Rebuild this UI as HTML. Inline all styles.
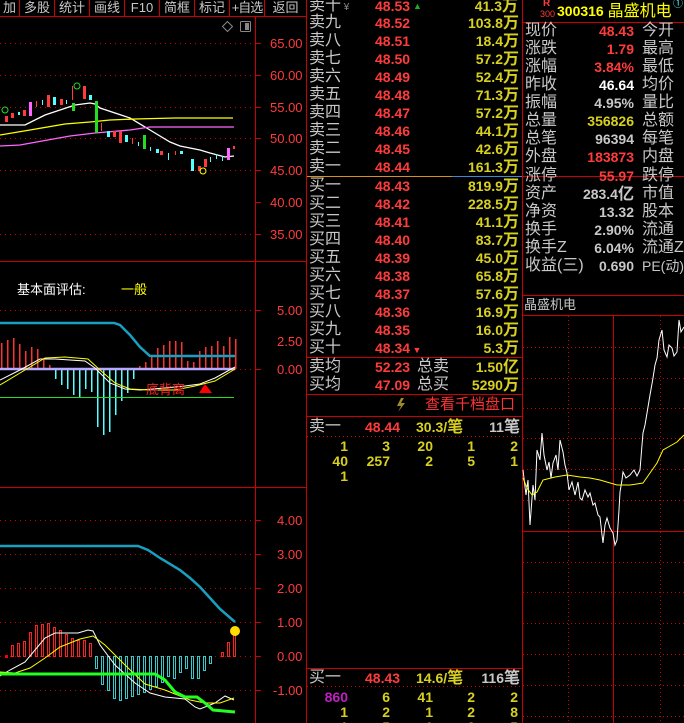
<!DOCTYPE html>
<html><head><meta charset="utf-8"><style>
html,body{margin:0;width:684px;height:723px;background:#000;overflow:hidden;position:relative;font-family:"Liberation Sans","Noto Sans CJK SC",sans-serif}
.a{position:absolute;white-space:nowrap;line-height:18px}
.c{font-size:16px;color:#c8c8c8}
.n{font-size:14px;font-weight:bold}
.r{color:#ff3c3c}.y{color:#d8d020}.w{color:#c8c8c8}.wh{color:#fff}
.tb{position:absolute;top:0;height:16px;font-size:13px;color:#c8c8c8;line-height:15px;text-align:center;border-right:1px solid #c00;white-space:nowrap;overflow:hidden}
</style></head><body>
<div class="tb" style="left:0;width:19px">加</div>
<div class="tb" style="left:20px;width:34px">多股</div>
<div class="tb" style="left:55px;width:34px">统计</div>
<div class="tb" style="left:90px;width:34px">画线</div>
<div class="tb" style="left:125px;width:34px">F10</div>
<div class="tb" style="left:160px;width:34px">简框</div>
<div class="tb" style="left:195px;width:34px">标记</div>
<div class="tb" style="left:230px;width:34px;letter-spacing:-1px">+自选</div>
<div class="tb" style="left:265px;width:41px;border:none">返回</div>

<svg width="684" height="723" style="position:absolute;left:0;top:0">
<line x1="0" y1="16.5" x2="306" y2="16.5" stroke="#c00"/>
<line x1="255.5" y1="17" x2="255.5" y2="723" stroke="#c00"/>
<line x1="306.5" y1="0" x2="306.5" y2="723" stroke="#c00"/>
<line x1="522.5" y1="0" x2="522.5" y2="723" stroke="#c00"/>
<line x1="0" y1="261.5" x2="306" y2="261.5" stroke="#c00"/>
<line x1="0" y1="487.5" x2="306" y2="487.5" stroke="#c00"/>
<path d="M227.5 21.5 L232.5 26.5 L227.5 31.5 L222.5 26.5Z" fill="none" stroke="#888"/>
<rect x="240.5" y="21.5" width="10" height="10" fill="none" stroke="#888" rx="1"/><rect x="245" y="23" width="4" height="7" fill="#888"/>
<g stroke="#c00" stroke-dasharray="1,4">
<line x1="0" y1="43.5" x2="255" y2="43.5"/><line x1="0" y1="75.5" x2="255" y2="75.5"/><line x1="0" y1="107.5" x2="255" y2="107.5"/><line x1="0" y1="138.5" x2="255" y2="138.5"/><line x1="0" y1="170.5" x2="255" y2="170.5"/><line x1="0" y1="234.5" x2="255" y2="234.5"/>
<line x1="0" y1="310.5" x2="255" y2="310.5"/><line x1="235" y1="369.5" x2="255" y2="369.5"/>
<line x1="0" y1="520.5" x2="255" y2="520.5"/><line x1="0" y1="554.5" x2="255" y2="554.5"/><line x1="0" y1="588.5" x2="255" y2="588.5"/><line x1="0" y1="622.5" x2="255" y2="622.5"/><line x1="0" y1="656.5" x2="255" y2="656.5"/><line x1="0" y1="690.5" x2="255" y2="690.5"/>
</g>
<g stroke="#c00"><line x1="255" y1="43.5" x2="261" y2="43.5"/><line x1="255" y1="75.5" x2="261" y2="75.5"/><line x1="255" y1="107.5" x2="261" y2="107.5"/><line x1="255" y1="138.5" x2="261" y2="138.5"/><line x1="255" y1="170.5" x2="261" y2="170.5"/><line x1="255" y1="202.5" x2="261" y2="202.5"/><line x1="255" y1="234.5" x2="261" y2="234.5"/><line x1="255" y1="310.5" x2="261" y2="310.5"/><line x1="255" y1="369.5" x2="261" y2="369.5"/><line x1="255" y1="520.5" x2="261" y2="520.5"/><line x1="255" y1="554.5" x2="261" y2="554.5"/><line x1="255" y1="588.5" x2="261" y2="588.5"/><line x1="255" y1="622.5" x2="261" y2="622.5"/><line x1="255" y1="656.5" x2="261" y2="656.5"/><line x1="255" y1="690.5" x2="261" y2="690.5"/></g>
<g fill="#ff3c3c" font-size="13" font-family="Liberation Sans">
<text x="270" y="48">65.00</text><text x="270" y="80">60.00</text><text x="270" y="112">55.00</text><text x="270" y="143">50.00</text><text x="270" y="175">45.00</text><text x="270" y="207">40.00</text><text x="270" y="239">35.00</text>
<text x="277" y="315">5.00</text><text x="277" y="346">2.50</text><text x="277" y="374">0.00</text>
<text x="277" y="525">4.00</text><text x="277" y="559">3.00</text><text x="277" y="593">2.00</text><text x="277" y="627">1.00</text><text x="277" y="661">0.00</text><text x="273" y="695">-1.00</text>
</g>
<polyline fill="none" stroke="#fff" stroke-width="1.3" points="0,125 25,125 45,115 75,105 90,103 95,104 100,108 130,118 150,130 170,142 180,146 200,150 210,153 225,157 234,156"/>
<polyline fill="none" stroke="#ff0" stroke-width="1.3" points="0,135 30,130 65,124 90,122 110,120 135,119 175,118 233,118"/>
<polyline fill="none" stroke="#f6f" stroke-width="1.3" points="0,146 20,145 70,136 95,133 130,130 150,127 180,127 234,127"/>
<g fill="#ff3c3c"><rect x="5" y="116" width="3" height="6"/><rect x="11" y="113" width="3" height="5"/><rect x="23" y="110" width="3" height="6"/><rect x="36" y="101" width="1" height="6"/><rect x="47" y="95" width="3" height="12"/><rect x="60" y="99" width="3" height="6"/><rect x="72" y="86" width="1" height="14"/><rect x="83" y="86" width="3" height="13"/><rect x="101" y="123" width="1" height="8"/><rect x="113" y="131" width="3" height="6"/><rect x="119" y="131" width="3" height="12"/><rect x="132" y="138" width="1" height="6"/><rect x="160" y="151" width="3" height="4"/><rect x="175" y="151" width="1" height="4"/><rect x="198" y="166" width="3" height="5"/><rect x="204" y="159" width="3" height="8"/><rect x="233" y="146" width="2" height="3"/></g>
<g fill="#5ff"><rect x="18" y="112" width="2" height="3"/><rect x="42" y="100" width="1" height="5"/><rect x="53" y="97" width="3" height="8"/><rect x="66" y="100" width="1" height="4"/><rect x="89" y="95" width="3" height="5"/><rect x="107" y="131" width="3" height="6"/><rect x="125" y="135" width="3" height="7"/><rect x="138" y="142" width="1" height="4"/><rect x="150" y="147" width="1" height="4"/><rect x="156" y="149" width="3" height="4"/><rect x="168" y="153" width="1" height="7"/><rect x="180" y="151" width="3" height="3"/><rect x="191" y="159" width="3" height="12"/><rect x="210" y="157" width="1" height="5"/><rect x="216" y="154" width="1" height="5"/><rect x="222" y="156" width="1" height="5"/></g>
<g fill="#2d2"><rect x="72" y="103" width="3" height="8"/><rect x="95" y="101" width="3" height="32"/><rect x="143" y="135" width="3" height="14"/></g>
<g fill="#f6f"><rect x="29" y="102" width="3" height="14"/><rect x="227" y="148" width="3" height="12"/></g>
<circle cx="77" cy="86" r="3" fill="none" stroke="#2d2"/><circle cx="5" cy="110" r="3" fill="none" stroke="#2d2"/><circle cx="203" cy="171" r="3" fill="none" stroke="#ff0"/>
<text x="17" y="294" fill="#fff" font-size="13" font-family="Liberation Sans,Noto Sans CJK SC">基本面评估:</text>
<text x="121" y="294" fill="#ff0" font-size="13" font-family="Liberation Sans,Noto Sans CJK SC">一般</text>
<g fill="#ff3030"><rect x="1" y="343" width="1.5" height="26"/><rect x="7" y="340" width="1.5" height="29"/><rect x="13" y="338" width="1.5" height="31"/><rect x="19" y="344" width="1.5" height="25"/><rect x="25" y="351" width="1.5" height="18"/><rect x="31" y="347" width="1.5" height="22"/><rect x="37" y="349" width="1.5" height="20"/><rect x="43" y="358" width="1.5" height="11"/><rect x="49" y="365" width="1.5" height="4"/><rect x="139" y="366" width="1.5" height="3"/><rect x="145" y="362" width="1.5" height="7"/><rect x="151" y="356" width="1.5" height="13"/><rect x="157" y="348" width="1.5" height="21"/><rect x="163" y="345" width="1.5" height="24"/><rect x="169" y="341" width="1.5" height="28"/><rect x="175" y="341" width="1.5" height="28"/><rect x="181" y="342" width="1.5" height="27"/><rect x="187" y="361" width="1.5" height="8"/><rect x="193" y="362" width="1.5" height="7"/><rect x="199" y="351" width="1.5" height="18"/><rect x="205" y="347" width="1.5" height="22"/><rect x="211" y="346" width="1.5" height="23"/><rect x="217" y="341" width="1.5" height="28"/><rect x="223" y="346" width="1.5" height="23"/><rect x="229" y="337" width="1.5" height="32"/><rect x="235" y="339" width="1.5" height="30"/></g>
<g fill="#5ff"><rect x="55" y="369" width="1.5" height="10"/><rect x="61" y="369" width="1.5" height="16"/><rect x="67" y="369" width="1.5" height="20"/><rect x="73" y="369" width="1.5" height="26"/><rect x="79" y="369" width="1.5" height="28"/><rect x="85" y="369" width="1.5" height="20"/><rect x="91" y="369" width="1.5" height="23"/><rect x="97" y="369" width="1.5" height="58"/><rect x="103" y="369" width="1.5" height="66"/><rect x="109" y="369" width="1.5" height="63"/><rect x="115" y="369" width="1.5" height="46"/><rect x="121" y="369" width="1.5" height="32"/><rect x="127" y="369" width="1.5" height="24"/><rect x="133" y="369" width="1.5" height="10"/></g>
<polyline fill="none" stroke="#19a0c0" stroke-width="2.5" points="0,323 114,323 120,325 130,335 140,347 150,356 235,356"/>
<line x1="0" y1="369" x2="235" y2="369" stroke="#b8a8ff" stroke-width="2.5"/>
<line x1="0" y1="397.5" x2="234" y2="397.5" stroke="#2d2"/>
<polyline fill="none" stroke="#fff" points="0,380 20,370 40,359 55,359 85,361 95,368 110,383 125,389 140,390 165,388 185,386 200,384 215,378 235,367"/>
<polyline fill="none" stroke="#ff0" points="0,385 25,370 45,358 65,357 88,359 100,370 115,383 130,389 150,390 175,390 195,386 215,381 235,369"/>
<text x="146" y="394" fill="#ff2020" font-size="13" font-family="Liberation Sans,Noto Sans CJK SC">底背离</text>
<path d="M205 384 L212 393 L199 393Z" fill="#f00"/>
<g fill="none" stroke="#ff2020"><rect x="11.5" y="645.5" width="2" height="11"/><rect x="17.5" y="643.5" width="2" height="13"/><rect x="23.5" y="641.5" width="2" height="15"/><rect x="29.5" y="632.5" width="2" height="24"/><rect x="35.5" y="625.5" width="2" height="31"/><rect x="41.5" y="624.5" width="2" height="32"/><rect x="47.5" y="623.5" width="2" height="33"/><rect x="53.5" y="627.5" width="2" height="29"/><rect x="59.5" y="630.5" width="2" height="26"/><rect x="65.5" y="634.5" width="2" height="22"/><rect x="71.5" y="638.5" width="2" height="18"/><rect x="77.5" y="640.5" width="2" height="16"/><rect x="83.5" y="640.5" width="2" height="16"/><rect x="89.5" y="643.5" width="2" height="13"/><rect x="221.5" y="652.5" width="2" height="4"/><rect x="227.5" y="642.5" width="2" height="14"/><rect x="233.5" y="633.5" width="2" height="23"/></g>
<rect x="5" y="655" width="3" height="3" fill="#f00"/>
<g fill="none" stroke="#3cc"><rect x="95.5" y="656.5" width="2" height="12"/><rect x="101.5" y="656.5" width="2" height="28"/><rect x="107.5" y="656.5" width="2" height="34"/><rect x="113.5" y="656.5" width="2" height="42"/><rect x="119.5" y="656.5" width="2" height="44"/><rect x="125.5" y="656.5" width="2" height="42"/><rect x="131.5" y="656.5" width="2" height="40"/><rect x="137.5" y="656.5" width="2" height="38"/><rect x="143.5" y="656.5" width="2" height="36"/><rect x="149.5" y="656.5" width="2" height="33"/><rect x="155.5" y="656.5" width="2" height="30"/><rect x="161.5" y="656.5" width="2" height="26"/><rect x="167.5" y="656.5" width="2" height="20"/><rect x="173.5" y="656.5" width="2" height="22"/><rect x="179.5" y="656.5" width="2" height="16"/><rect x="185.5" y="656.5" width="2" height="12"/><rect x="191.5" y="656.5" width="2" height="22"/><rect x="197.5" y="656.5" width="2" height="22"/><rect x="203.5" y="656.5" width="2" height="14"/><rect x="209.5" y="656.5" width="2" height="7"/></g>
<polyline fill="none" stroke="#19a0c0" stroke-width="2.5" points="0,546 138,546 148,550 160,558 180,570 190,578 200,587 210,598 220,609 235,622"/>
<polyline fill="none" stroke="#fff" points="0,676 10,670 25,662 35,650 45,638 55,633 78,633 88,630 93,631 100,645 115,665 135,683 150,693 165,697 185,699 195,707 200,709 215,703 225,696 234,700"/>
<polyline fill="none" stroke="#ff0" points="0,672 15,673 30,668 45,658 60,647 80,639 93,636 105,645 125,665 145,684 165,690 190,700 205,703 220,703 234,698"/>
<polyline fill="none" stroke="#2f2" stroke-width="3" points="0,674 155,674 165,680 175,692 185,697 197,697 205,703 213,710 235,712"/>
<circle cx="235" cy="631" r="5" fill="#fd0"/>
<line x1="307" y1="176.5" x2="452" y2="176.5" stroke="#d8901a"/>
<line x1="452" y1="176.5" x2="522" y2="176.5" stroke="#3a8ad8"/>
<line x1="307" y1="357.5" x2="522" y2="357.5" stroke="#c00"/>
<line x1="307" y1="394.5" x2="522" y2="394.5" stroke="#c00"/>
<line x1="307" y1="416.5" x2="522" y2="416.5" stroke="#c00"/>
<line x1="307" y1="436.5" x2="522" y2="436.5" stroke="#c00" stroke-dasharray="1,3"/>
<line x1="307" y1="668.5" x2="522" y2="668.5" stroke="#c00"/>
<line x1="307" y1="686.5" x2="522" y2="686.5" stroke="#c00" stroke-dasharray="1,3"/>
<path d="M401 398 L397 406 L401 406 L398 412 L405 403 L401 403 L404 398Z" fill="#a08a2a"/>
<line x1="523" y1="22.5" x2="684" y2="22.5" stroke="#c00"/>
<line x1="523" y1="176.5" x2="684" y2="176.5" stroke="#c00"/>
<line x1="523" y1="295.5" x2="684" y2="295.5" stroke="#c00"/>
<line x1="523" y1="315.5" x2="684" y2="315.5" stroke="#c00"/>
<line x1="523" y1="531.5" x2="684" y2="531.5" stroke="#c00"/>
<line x1="613.5" y1="316" x2="613.5" y2="723" stroke="#c00"/>
<g stroke="#c00" stroke-dasharray="1,3">
<line x1="568.5" y1="316" x2="568.5" y2="723"/><line x1="660.5" y1="316" x2="660.5" y2="723"/>
<line x1="523" y1="347.5" x2="684" y2="347.5"/><line x1="523" y1="378.5" x2="684" y2="378.5"/><line x1="523" y1="408.5" x2="684" y2="408.5"/><line x1="523" y1="438.5" x2="684" y2="438.5"/><line x1="523" y1="469.5" x2="684" y2="469.5"/><line x1="523" y1="500.5" x2="684" y2="500.5"/><line x1="523" y1="562.5" x2="684" y2="562.5"/><line x1="523" y1="592.5" x2="684" y2="592.5"/><line x1="523" y1="623.5" x2="684" y2="623.5"/><line x1="523" y1="654.5" x2="684" y2="654.5"/><line x1="523" y1="685.5" x2="684" y2="685.5"/><line x1="523" y1="716.5" x2="684" y2="716.5"/>
</g>
<polyline fill="none" stroke="#fff" points="523,470 526,495 528,480 530,525 533,485 535,500 537,450 540,460 542,433 544,455 547,470 549,462 551,478 553,463 556,455 558,470 560,440 563,452 565,465 567,473 569,490 572,482 575,495 578,482 580,498 582,500 585,490 588,497 590,493 593,505 595,503 598,515 600,517 602,535 603,543 605,525 607,518 610,528 613,533 615,545 617,540 619,510 620,492 622,480 623,472 626,478 630,475 634,470 637,476 640,470 642,445 643,433 645,425 647,413 650,395 653,378 655,365 657,358 659,340 662,330 664,350 667,357 669,345 672,348 674,356 677,352 679,320 681,332 684,327"/>
<polyline fill="none" stroke="#ff0" points="523,478 527,488 532,495 537,492 543,480 555,477 567,475 580,477 590,478 600,480 617,485 630,485 643,483 650,473 657,463 663,450 670,446 677,442 684,435"/>
</svg>

<div class="a c" style="left:309px;top:-3px">卖十<span style="font-size:10px;color:#888"> ¥</span></div>
<div class="a n r" style="left:375px;top:-3px">48.53</div><div class="a" style="left:413px;top:-3px;font-size:9px;color:#2a2">▲</div>
<div class="a n y" style="right:166px;top:-3px">41.3<span class="c" style="color:#d8d020">万</span></div>

<div style="position:absolute;left:309px;top:14px;width:212px;font-size:0">
<div style="position:relative;height:18px"><span class="a c" style="left:0">卖九</span><span class="a n r" style="left:66px">48.52</span><span class="a n y" style="right:2px">103.8<span class="c y">万</span></span></div>
<div style="position:relative;height:18px"><span class="a c" style="left:0">卖八</span><span class="a n r" style="left:66px">48.51</span><span class="a n y" style="right:2px">18.4<span class="c y">万</span></span></div>
<div style="position:relative;height:18px"><span class="a c" style="left:0">卖七</span><span class="a n r" style="left:66px">48.50</span><span class="a n y" style="right:2px">57.2<span class="c y">万</span></span></div>
<div style="position:relative;height:18px"><span class="a c" style="left:0">卖六</span><span class="a n r" style="left:66px">48.49</span><span class="a n y" style="right:2px">52.4<span class="c y">万</span></span></div>
<div style="position:relative;height:18px"><span class="a c" style="left:0">卖五</span><span class="a n r" style="left:66px">48.48</span><span class="a n y" style="right:2px">71.3<span class="c y">万</span></span></div>
<div style="position:relative;height:18px"><span class="a c" style="left:0">卖四</span><span class="a n r" style="left:66px">48.47</span><span class="a n y" style="right:2px">57.2<span class="c y">万</span></span></div>
<div style="position:relative;height:18px"><span class="a c" style="left:0">卖三</span><span class="a n r" style="left:66px">48.46</span><span class="a n y" style="right:2px">44.1<span class="c y">万</span></span></div>
<div style="position:relative;height:18px"><span class="a c" style="left:0">卖二</span><span class="a n r" style="left:66px">48.45</span><span class="a n y" style="right:2px">42.6<span class="c y">万</span></span></div>
<div style="position:relative;height:18px"><span class="a c" style="left:0">卖一</span><span class="a n r" style="left:66px">48.44</span><span class="a n y" style="right:2px">161.3<span class="c y">万</span></span></div>
</div>
<div style="position:absolute;left:309px;top:177px;width:212px;font-size:0">
<div style="position:relative;height:18px"><span class="a c" style="left:0">买一</span><span class="a n r" style="left:66px">48.43</span><span class="a n y" style="right:2px">819.9<span class="c y">万</span></span></div>
<div style="position:relative;height:18px"><span class="a c" style="left:0">买二</span><span class="a n r" style="left:66px">48.42</span><span class="a n y" style="right:2px">228.5<span class="c y">万</span></span></div>
<div style="position:relative;height:18px"><span class="a c" style="left:0">买三</span><span class="a n r" style="left:66px">48.41</span><span class="a n y" style="right:2px">41.1<span class="c y">万</span></span></div>
<div style="position:relative;height:18px"><span class="a c" style="left:0">买四</span><span class="a n r" style="left:66px">48.40</span><span class="a n y" style="right:2px">83.7<span class="c y">万</span></span></div>
<div style="position:relative;height:18px"><span class="a c" style="left:0">买五</span><span class="a n r" style="left:66px">48.39</span><span class="a n y" style="right:2px">45.0<span class="c y">万</span></span></div>
<div style="position:relative;height:18px"><span class="a c" style="left:0">买六</span><span class="a n r" style="left:66px">48.38</span><span class="a n y" style="right:2px">65.8<span class="c y">万</span></span></div>
<div style="position:relative;height:18px"><span class="a c" style="left:0">买七</span><span class="a n r" style="left:66px">48.37</span><span class="a n y" style="right:2px">57.6<span class="c y">万</span></span></div>
<div style="position:relative;height:18px"><span class="a c" style="left:0">买八</span><span class="a n r" style="left:66px">48.36</span><span class="a n y" style="right:2px">16.9<span class="c y">万</span></span></div>
<div style="position:relative;height:18px"><span class="a c" style="left:0">买九</span><span class="a n r" style="left:66px">48.35</span><span class="a n y" style="right:2px">16.0<span class="c y">万</span></span></div>
<div style="position:relative;height:18px"><span class="a c" style="left:0">买十</span><span class="a n r" style="left:66px">48.34<span style="font-size:9px"> ▼</span></span><span class="a n y" style="right:2px">5.3<span class="c y">万</span></span></div>
<div style="position:relative;height:18px;margin-top:1px"><span class="a c" style="left:0">卖均</span><span class="a n r" style="left:66px">52.23</span><span class="a c" style="left:108px">总卖</span><span class="a n y" style="right:2px">1.50<span class="c y">亿</span></span></div>
<div style="position:relative;height:18px"><span class="a c" style="left:0">买均</span><span class="a n r" style="left:66px">47.09</span><span class="a c" style="left:108px">总买</span><span class="a n y" style="right:2px">5290<span class="c y">万</span></span></div>
</div>
<div class="a" style="left:425px;top:396px;font-size:15px;color:#ff3030">查看千档盘口</div>
<div class="a c" style="left:309px;top:418px">卖一</div><div class="a n r" style="left:365px;top:418px">48.44</div><div class="a n y" style="left:416px;top:418px">30.3/<span class="c y">笔</span></div><div class="a n w" style="right:164px;top:418px">11<span class="c">笔</span></div>
<div style="position:absolute;left:307px;top:437px;font-size:14px;font-weight:bold;color:#d8d020;line-height:15px">
<div style="position:relative;height:15px"><span class="a" style="right:-41px">1</span><span class="a" style="right:-83px">3</span><span class="a" style="right:-126px">20</span><span class="a" style="right:-168px">1</span><span class="a" style="right:-211px">2</span></div>
<div style="position:relative;height:15px"><span class="a" style="right:-41px">40</span><span class="a" style="right:-83px">257</span><span class="a" style="right:-126px">2</span><span class="a" style="right:-168px">5</span><span class="a" style="right:-211px">1</span></div>
<div style="position:relative;height:15px"><span class="a" style="right:-41px">1</span></div>
</div>
<div class="a c" style="left:309px;top:669px">买一</div><div class="a n r" style="left:365px;top:669px">48.43</div><div class="a n y" style="left:416px;top:669px">14.6/<span class="c y">笔</span></div><div class="a n w" style="right:164px;top:669px">116<span class="c">笔</span></div>
<div style="position:absolute;left:307px;top:688px;font-size:14px;font-weight:bold;color:#d8d020;line-height:15px">
<div style="position:relative;height:15px"><span class="a" style="right:-41px;color:#c020c0">860</span><span class="a" style="right:-83px">6</span><span class="a" style="right:-126px">41</span><span class="a" style="right:-168px">2</span><span class="a" style="right:-211px">2</span></div>
<div style="position:relative;height:15px"><span class="a" style="right:-41px">1</span><span class="a" style="right:-83px">2</span><span class="a" style="right:-126px">1</span><span class="a" style="right:-168px">2</span><span class="a" style="right:-211px">8</span></div>
<div style="position:relative;height:15px"><span class="a" style="right:-41px">1</span><span class="a" style="right:-83px">5</span><span class="a" style="right:-126px">1</span><span class="a" style="right:-168px">2</span><span class="a" style="right:-211px">5</span></div>
</div>

<div class="a" style="left:543px;top:-5px;font-size:10px;color:#ff3c3c;font-weight:bold">R</div>
<div class="a" style="left:540px;top:5px;font-size:9px;color:#ff3c3c">300</div>
<div class="a" style="left:557px;top:2px;font-size:14px;font-weight:bold;color:#ff0">300316 <span style="font-size:16px;font-weight:normal">晶盛机电</span></div>
<div class="a" style="left:673px;top:-4px;font-size:10px;color:#5ff">①</div>
<div style="position:absolute;left:525px;top:22px;width:159px;font-size:0">
<div style="position:relative;height:18px"><span class="a c">现价</span><span class="a n r" style="right:50px">48.43</span><span class="a c" style="left:117px">今开</span></div>
<div style="position:relative;height:18px"><span class="a c">涨跌</span><span class="a n r" style="right:50px">1.79</span><span class="a c" style="left:117px">最高</span></div>
<div style="position:relative;height:18px"><span class="a c">涨幅</span><span class="a n r" style="right:50px">3.84%</span><span class="a c" style="left:117px">最低</span></div>
<div style="position:relative;height:18px"><span class="a c">昨收</span><span class="a n wh" style="right:50px">46.64</span><span class="a c" style="left:117px">均价</span></div>
<div style="position:relative;height:18px"><span class="a c">振幅</span><span class="a n w" style="right:50px">4.95%</span><span class="a c" style="left:117px">量比</span></div>
<div style="position:relative;height:18px"><span class="a c">总量</span><span class="a n y" style="right:50px">356826</span><span class="a c" style="left:117px">总额</span></div>
<div style="position:relative;height:18px"><span class="a c">总笔</span><span class="a n w" style="right:50px">96394</span><span class="a c" style="left:117px">每笔</span></div>
<div style="position:relative;height:18px"><span class="a c">外盘</span><span class="a n r" style="right:50px">183873</span><span class="a c" style="left:117px">内盘</span></div>
<div style="position:relative;height:18px;margin-top:1px"><span class="a c">涨停</span><span class="a n r" style="right:50px">55.97</span><span class="a c" style="left:117px">跌停</span></div>
<div style="position:relative;height:18px"><span class="a c">资产</span><span class="a n w" style="right:50px">283.4<span class="c">亿</span></span><span class="a c" style="left:117px">市值</span></div>
<div style="position:relative;height:18px"><span class="a c">净资</span><span class="a n w" style="right:50px">13.32</span><span class="a c" style="left:117px">股本</span></div>
<div style="position:relative;height:18px"><span class="a c">换手</span><span class="a n w" style="right:50px">2.90%</span><span class="a c" style="left:117px">流通</span></div>
<div style="position:relative;height:18px"><span class="a c">换手Z</span><span class="a n w" style="right:50px">6.04%</span><span class="a c" style="left:117px">流通Z</span></div>
<div style="position:relative;height:18px"><span class="a c">收益(三)</span><span class="a n w" style="right:50px">0.690</span><span class="a c" style="left:117px;font-size:14px">PE(动)</span></div>
</div>
<div class="a" style="left:524px;top:296px;font-size:13px;color:#c8c8c8">晶盛机电</div>
</body></html>
